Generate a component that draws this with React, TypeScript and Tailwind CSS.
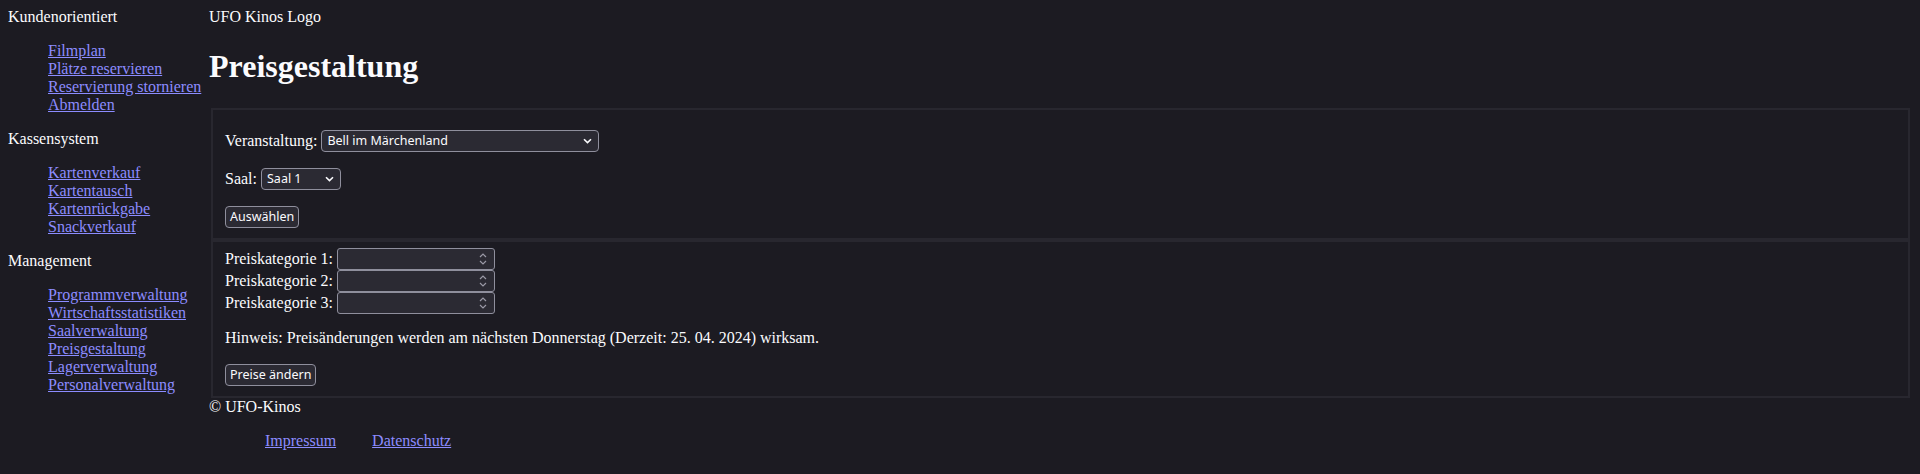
const navSections = [
  {
    title: 'Kundenorientiert',
    links: ['Filmplan', 'Plätze reservieren', 'Reservierung stornieren', 'Abmelden'],
  },
  {
    title: 'Kassensystem',
    links: ['Kartenverkauf', 'Kartentausch', 'Kartenrückgabe', 'Snackverkauf'],
  },
  {
    title: 'Management',
    links: [
      'Programmverwaltung',
      'Wirtschaftsstatistiken',
      'Saalverwaltung',
      'Preisgestaltung',
      'Lagerverwaltung',
      'Personalverwaltung',
    ],
  },
];

function Chevron() {
  return (
    <svg width="9" height="6" viewBox="0 0 9 6" className="shrink-0">
      <path d="M1 1.2 L4.5 4.6 L8 1.2" fill="none" stroke="#fbfbfe" strokeWidth="1.6" />
    </svg>
  );
}

function Spinner() {
  return (
    <svg width="8" height="14" viewBox="0 0 8 14" className="shrink-0">
      <path d="M1 5 L4 2 L7 5" fill="none" stroke="#9a99a6" strokeWidth="1.2" />
      <path d="M1 9 L4 12 L7 9" fill="none" stroke="#9a99a6" strokeWidth="1.2" />
    </svg>
  );
}

function FakeSelect({ value, width }: { value: string; width: string }) {
  return (
    <div
      className={`${width} h-[22px] flex items-center justify-between pl-[5px] pr-[6px] rounded-[4px] border border-[#8f8f9d] bg-[#2b2a33] text-[12.5px] font-['Noto_Sans',sans-serif] text-[#fbfbfe]`}
    >
      <span>{value}</span>
      <Chevron />
    </div>
  );
}

function Btn({ children }: { children: React.ReactNode }) {
  return (
    <button className="h-[22px] px-[4px] rounded-[4px] border border-[#8f8f9d] bg-[#2b2a33] text-[12.5px] leading-none font-['Noto_Sans',sans-serif] text-[#fbfbfe]">
      {children}
    </button>
  );
}

function PriceRow({ n }: { n: number }) {
  return (
    <div className="flex items-center gap-1 h-[22px]">
      <span>Preiskategorie {n}:</span>
      <div className="w-[158px] h-[22px] flex items-center justify-end pr-[7px] rounded-[3px] border border-[#8f8f9d] bg-[#2b2a33]">
        <Spinner />
      </div>
    </div>
  );
}

export default function App() {
  return (
    <div className="min-h-screen bg-[#1c1b22] text-[#fbfbfe] font-['Liberation_Serif',serif] text-[16px] leading-[18px] p-2 flex gap-2">
      <nav className="w-[193px] shrink-0 whitespace-nowrap">
        {navSections.map((s) => (
          <div key={s.title}>
            <div>{s.title}</div>
            <ul className="my-4 pl-10">
              {s.links.map((l) => (
                <li key={l}>
                  <a href="#" className="text-[#8c8cff] underline">
                    {l}
                  </a>
                </li>
              ))}
            </ul>
          </div>
        ))}
      </nav>

      <main className="flex-1 min-w-0">
        <div>UFO Kinos Logo</div>
        <h1 className="text-[32px] leading-[36px] font-bold mt-[22px] mb-[24px]">Preisgestaltung</h1>

        <fieldset className="mx-[2px] border-2 border-[#28272f] px-3 pt-[20px] pb-[10px] flex flex-col gap-4">
          <div className="flex items-center gap-1 h-[22px]">
            <span>Veranstaltung:</span>
            <FakeSelect value="Bell im Märchenland" width="w-[278px]" />
          </div>
          <div className="flex items-center gap-1 h-[22px]">
            <span>Saal:</span>
            <FakeSelect value="Saal 1" width="w-[80px]" />
          </div>
          <div className="flex">
            <Btn>Auswählen</Btn>
          </div>
        </fieldset>

        <fieldset className="mx-[2px] border-2 border-[#28272f] px-3 pt-[6px] pb-[10px]">
          <PriceRow n={1} />
          <PriceRow n={2} />
          <PriceRow n={3} />
          <p className="mt-[15px]">
            Hinweis: Preisänderungen werden am nächsten Donnerstag (Derzeit: 25. 04. 2024) wirksam.
          </p>
          <div className="flex mt-[17px]">
            <Btn>Preise ändern</Btn>
          </div>
        </fieldset>

        <div>© UFO-Kinos</div>
        <ul className="mt-4 flex pl-[56px] gap-[36px]">
          <li>
            <a href="#" className="text-[#8c8cff] underline">
              Impressum
            </a>
          </li>
          <li>
            <a href="#" className="text-[#8c8cff] underline">
              Datenschutz
            </a>
          </li>
        </ul>
      </main>
    </div>
  );
}
